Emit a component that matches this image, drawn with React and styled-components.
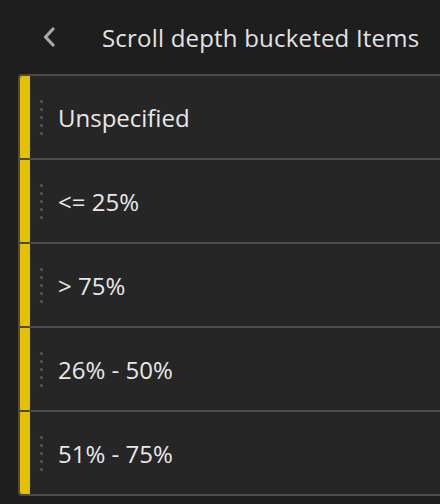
import styled, { createGlobalStyle } from "styled-components";

const GlobalStyle = createGlobalStyle`
  html, body {
    margin: 0;
    padding: 0;
    background: #1e1e1e;
    overflow: hidden;
    font-family: "Open Sans", "DejaVu Sans", sans-serif;
  }
`;

const Page = styled.div`
  width: 440px;
  height: 504px;
  background: #1e1e1e;
`;

const Header = styled.div`
  display: flex;
  align-items: center;
  height: 74px;
  padding-left: 42px;
  box-sizing: border-box;
`;

const BackButton = styled.button`
  display: flex;
  align-items: center;
  justify-content: center;
  width: 15px;
  height: 20px;
  padding: 0;
  margin-right: 45px;
  border: none;
  background: none;
  color: #a9a9a9;
  cursor: pointer;
`;

const Title = styled.h1`
  margin: 0;
  font-size: 24px;
  font-weight: 400;
  letter-spacing: 0.2px;
  color: #e3e3e3;
  white-space: nowrap;
`;

const List = styled.div`
  margin-left: 18px;
  width: 440px;
  border: 2px solid #4b4b4b;
  border-right: none;
  border-radius: 4px 0 0 4px;
  overflow: hidden;
  background: #262626;
`;

const Row = styled.div`
  display: flex;
  align-items: center;
  height: 82px;
  border-top: ${(p) => (p.$first ? "none" : "2px solid #4b4b4b")};
`;

const Marker = styled.div`
  align-self: stretch;
  width: 10px;
  background: ${(p) => p.$color};
  flex-shrink: 0;
`;

const Handle = styled.div`
  display: flex;
  flex-direction: column;
  gap: 5px;
  margin-left: 10px;
  margin-right: 15px;
`;

const Dot = styled.span`
  width: 3px;
  height: 3px;
  border-radius: 50%;
  background: #575757;
`;

const Label = styled.span`
  font-size: 24px;
  font-weight: 500;
  color: #e8e8e8;
  white-space: nowrap;
`;

const items = ["Unspecified", "<= 25%", "> 75%", "26% - 50%", "51% - 75%"];

const Chevron = () => (
  <svg width="15" height="20" viewBox="0 0 15 20" fill="none">
    <path
      d="M11 2 L3.5 10 L11 18"
      stroke="currentColor"
      strokeWidth="3.2"
      strokeLinecap="round"
      strokeLinejoin="round"
    />
  </svg>
);

export default function App() {
  return (
    <Page>
      <GlobalStyle />
      <Header>
        <BackButton aria-label="Back">
          <Chevron />
        </BackButton>
        <Title>Scroll depth bucketed Items</Title>
      </Header>
      <List>
        {items.map((item, i) => (
          <Row key={item} $first={i === 0}>
            <Marker $color="#e3c000" />
            <Handle>
              {[0, 1, 2, 3, 4].map((d) => (
                <Dot key={d} />
              ))}
            </Handle>
            <Label>{item}</Label>
          </Row>
        ))}
      </List>
    </Page>
  );
}
